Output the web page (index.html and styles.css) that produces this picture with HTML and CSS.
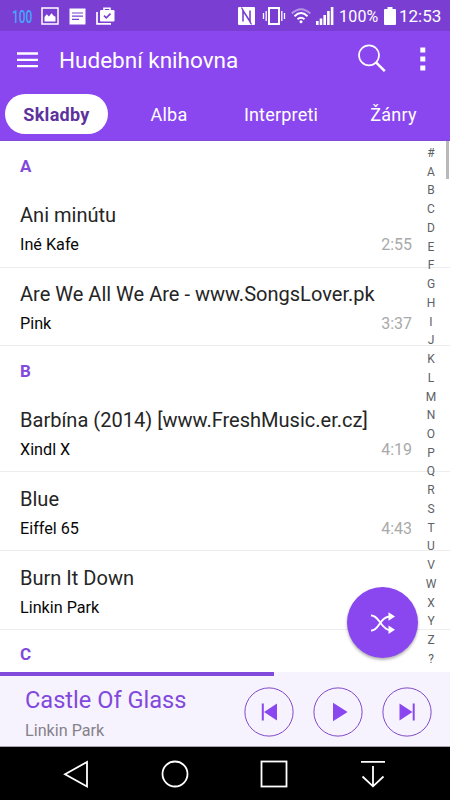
FILE: index.html
```html
<!DOCTYPE html>
<html lang="cs">
<head>
<meta charset="utf-8">
<title>Hudební knihovna</title>
<link rel="stylesheet" href="styles.css">
</head>
<body>
<div class="phone">
  <div class="status">
    <span class="status-level">100</span>
    <svg class="st-image" width="18" height="18" viewBox="0 0 18 18"><rect x="1" y="1" width="16" height="16" fill="none" stroke="#fff" stroke-width="1.5"/><path d="M3.5 14.5V10l2.2-2.8 2.2 2.3 2.7-3.2 2 2.5 1.9 1v4.7z" fill="#fff"/></svg>
    <svg class="st-note" width="17" height="17" viewBox="0 0 17 17"><path fill="#fff" d="M.5.5h16v16H.5z"/><path d="M3 5h11M3 8.2h11M3 11.4h7" stroke="#7a3fd2" stroke-width="1.2"/></svg>
    <svg class="st-work" width="19" height="18" viewBox="0 0 19 18"><path d="M1 5v11.8h14" fill="none" stroke="#fff" stroke-width="1.7"/><path d="M8 4V1.2h6V4" fill="none" stroke="#fff" stroke-width="1.6"/><rect x="4" y="3" width="14.5" height="11.5" rx="1.2" fill="#fff"/><path d="M8 8.6l2.3 2.3L14.5 6.6" fill="none" stroke="#7a3fd2" stroke-width="1.6"/></svg>
    <div class="status-right">
      <svg class="st-nfc" width="17" height="18" viewBox="0 0 17 18"><rect width="17" height="18" rx="1" fill="#fff"/><path d="M5 14.500V3.500l7 11V3.500" fill="none" stroke="#7a3fd2" stroke-width="1.600"/><path d="M5 3.500L3.500.5M12 14.500l1.500 3" stroke="#7a3fd2" stroke-width="1.200"/></svg>
      <svg class="st-vibe" width="24" height="18" viewBox="0 0 24 18"><rect x="7" y="1" width="10" height="16" fill="none" stroke="#fff" stroke-width="2"/><path d="M1.500 6v6M4.200 4v10M19.800 4v10M22.500 6v6" stroke="#fff" stroke-width="1.300"/></svg>
      <svg class="st-wifi" width="20" height="16" viewBox="0 0 20 16" fill="none" stroke="#fff"><path d="M.8 5.500Q10-3 19.200 5.500" stroke-width="2" opacity=".45"/><path d="M3.500 8.200Q10 2 16.500 8.200M6.500 11.200q3.500-3 7 0" stroke-width="1.900"/><circle cx="10" cy="13.800" r="1.500" fill="#fff" stroke="none"/></svg>
      <svg class="st-signal" width="18" height="18" viewBox="0 0 18 18"><path d="M0 14h2.600v4H0zM3.700 11.500h2.600V18H3.700zM7.400 8H10v10H7.400zM11.100 4h2.600v14h-2.600zM14.800 0h2.600v18h-2.600z" fill="#fff"/></svg>
      <span class="status-pct">100%</span>
      <svg class="st-battery" width="12" height="18" viewBox="0 0 12 18"><path d="M3.500 0h5v2H11q1 0 1 1v14q0 1-1 1H1q-1 0-1-1V3q0-1 1-1h2.500z" fill="#fff"/></svg>
      <span class="status-time">12:53</span>
    </div>
  </div>

  <header class="header">
    <div class="titlebar">
      <svg class="menu" width="21" height="16" viewBox="0 0 21 16"><path d="M0 1.500h21M0 7.800h21M0 14.100h21" stroke="#fff" stroke-width="2.300"/></svg>
      <h1 class="title">Hudební knihovna</h1>
      <svg class="search" width="28" height="29" viewBox="0 0 28 29" fill="none" stroke="#fff"><circle cx="11" cy="11.300" r="10" stroke-width="1.700"/><path d="M18 18.300l8.800 8.900" stroke-width="2.500"/></svg>
      <svg class="more" width="6" height="24" viewBox="0 0 6 24"><path d="M.3.500h5v5h-5zM.3 9.500h5v5h-5zM.3 18.500h5v5h-5z" fill="#fff"/></svg>
    </div>
    <nav class="tabs">
      <span class="tab tab-active">Skladby</span>
      <span class="tab">Alba</span>
      <span class="tab">Interpreti</span>
      <span class="tab">Žánry</span>
    </nav>
  </header>

  <main class="list">
    <h2 class="section">A</h2>
    <div class="song"><div class="name">Ani minútu</div><div class="meta"><span>Iné Kafe</span><time>2:55</time></div></div>
    <div class="song"><div class="name">Are We All We Are - www.SongsLover.pk</div><div class="meta"><span>Pink</span><time>3:37</time></div></div>
    <h2 class="section">B</h2>
    <div class="song"><div class="name">Barbína (2014) [www.FreshMusic.er.cz]</div><div class="meta"><span>Xindl X</span><time>4:19</time></div></div>
    <div class="song"><div class="name">Blue</div><div class="meta"><span>Eiffel 65</span><time>4:43</time></div></div>
    <div class="song"><div class="name">Burn It Down</div><div class="meta"><span>Linkin Park</span></div></div>
    <h2 class="section">C</h2>

    <div class="index">
      <span>#</span><span>A</span><span>B</span><span>C</span><span>D</span><span>E</span><span>F</span><span>G</span><span>H</span><span>I</span><span>J</span><span>K</span><span>L</span><span>M</span><span>N</span><span>O</span><span>P</span><span>Q</span><span>R</span><span>S</span><span>T</span><span>U</span><span>V</span><span>W</span><span>X</span><span>Y</span><span>Z</span><span>?</span>
    </div>
    <div class="scrollbar"></div>
    <div class="fab">
      <svg width="26" height="22" viewBox="0 0 26 22"><path d="M1 3.500c3.500-.2 6 2.500 8.500 6S15 18 20 18M1 18.500c3.500.2 6-2.500 8.500-6.500S15 4.500 20 4.500" fill="none" stroke="#fff" stroke-width="1.900"/><path d="M18.500.300L25 4.500l-6.500 4.300zM18.500 13.500L25 17.800l-6.500 4.200z" fill="#fff"/></svg>
    </div>
  </main>

  <section class="player">
    <div class="progress"><div class="progress-fill"></div></div>
    <div class="player-body">
      <div class="now">
        <div class="now-title">Castle Of Glass</div>
        <div class="now-artist">Linkin Park</div>
      </div>
      <div class="controls">
        <svg width="50" height="50" viewBox="0 0 50 50"><circle cx="25" cy="25" r="24.100"/><path d="M17.800 16.500h2v17h-2zM33 16.500v17L20 25z"/></svg>
        <svg width="50" height="50" viewBox="0 0 50 50"><circle cx="25" cy="25" r="24.100"/><path d="M20 15.800L34.600 25 20 34.300z"/></svg>
        <svg width="50" height="50" viewBox="0 0 50 50"><circle cx="25" cy="25" r="24.100"/><path d="M17.500 16.500v17L30.500 25zM30.700 16.500h2v17h-2z"/></svg>
      </div>
    </div>
  </section>

  <footer class="navbar">
    <svg width="30" height="30" viewBox="0 0 30 30"><path d="M4 15.200L26 3v24.500z"/></svg>
    <svg width="30" height="30" viewBox="0 0 30 30"><circle cx="15" cy="15" r="12.500"/></svg>
    <svg width="30" height="30" viewBox="0 0 30 30"><rect x="2.500" y="2.500" width="25" height="25"/></svg>
    <svg width="30" height="30" viewBox="0 0 30 30"><path d="M3 2.800h24M15 7v20M4.500 17.500L15 27.300l10.500-9.800"/></svg>
  </footer>
</div>
</body>
</html>
```

FILE: styles.css
```css
* { box-sizing: border-box; }
body { margin: 0; font-family: Roboto, sans-serif; background: #fff; }
svg { display: block; flex: none; }
h1, h2 { margin: 0; }
.phone { width: 450px; height: 800px; display: flex; flex-direction: column; overflow: hidden; white-space: nowrap; }

.status { height: 31px; background: #7a3fd2; display: flex; align-items: center; padding: 1px 8px 0 12px; color: #fff; }
.status-level { width: 20px; color: #44a7f8; font-size: 18px; font-weight: 500; transform: scaleX(.66); transform-origin: left; }
.st-image { margin-left: 9px; }
.st-note { margin-left: 10px; }
.st-work { margin-left: 10px; }
.status-right { margin-left: auto; display: flex; align-items: center; }
.st-vibe { margin-left: 7px; }
.st-wifi { margin-left: 5px; }
.st-signal { margin-left: 5px; }
.status-pct { margin-left: 5px; width: 39px; font-size: 16px; letter-spacing: .2px; }
.st-battery { margin-left: 6px; }
.status-time { margin-left: 3px; width: 43px; font-size: 17px; }

.header { height: 110px; background: #8a47ef; color: #fff; border-bottom: 1px solid #804bd6; }
.titlebar { height: 57px; display: flex; align-items: center; padding: 0 25px 0 17px; }
.title { margin-left: 21px; font-size: 22.5px; font-weight: 400; }
.search { margin-left: auto; margin-top: -2px; }
.more { margin-left: 34px; margin-right: -1px; margin-top: -2px; }
.tabs { height: 52px; display: grid; grid-template-columns: 113px 112px 112px 113px; align-items: center; }
.tab { text-align: center; font-size: 18px; letter-spacing: .2px; }
.tab-active { width: 103px; height: 40px; line-height: 41px; margin-left: 5px; border-radius: 20px; background: #fff; color: #5d329d; font-weight: 700; letter-spacing: .3px; }

.list { position: relative; height: 531px; padding-top: .5px; overflow: hidden; background: #fff; }
.section { height: 47.25px; padding: 14.5px 20px 0; font-size: 17px; line-height: 20px; font-weight: 700; color: #8149dc; }
.song { height: 78.75px; padding: 13.5px 38px 0 20px; border-bottom: 1px solid #ededed; }
.name { font-size: 20.05px; line-height: 26px; color: #252525; }
.meta { display: flex; justify-content: space-between; margin-top: 6px; font-size: 16.2px; line-height: 21px; color: #080808; }
.meta time { color: #a9a9a9; font-size: 16px; }
.index { position: absolute; top: 3px; right: 9px; width: 20px; display: grid; grid-auto-rows: 18.74px; font-size: 12px; line-height: 19px; text-align: center; color: #5d6166; }
.scrollbar { position: absolute; top: 0; right: 1px; width: 3px; height: 38px; background: #b9b9b9; }
.fab { position: absolute; left: 347px; top: 446px; width: 71px; height: 71px; border-radius: 50%; background: #8a47ef; display: flex; align-items: center; justify-content: center; box-shadow: 0 2px 3px rgba(0,0,0,.3); }

.player { height: 75px; background: #f7f3fe; border-bottom: 1px solid #aaa7b2; }
.progress { height: 4px; }
.progress-fill { width: 274px; height: 4px; background: #8149dc; }
.player-body { height: 70px; display: flex; align-items: center; justify-content: space-between; padding: 1px 18px 0 25px; }
.now { padding-top: 3px; }
.now-title { font-size: 23.6px; line-height: 30px; color: #8149dc; }
.now-artist { margin-top: 6px; font-size: 16.2px; line-height: 20px; color: #85828a; }
.controls { display: flex; gap: 19px; }
.controls circle { fill: none; stroke: #8149c8; stroke-width: 1; }
.controls path { fill: #8a47ef; }

.navbar { height: 53px; background: #000; display: flex; gap: 69px; padding: 12px 0 0 61px; }
.navbar svg { fill: none; stroke: #fff; stroke-width: 1.8; }
```
